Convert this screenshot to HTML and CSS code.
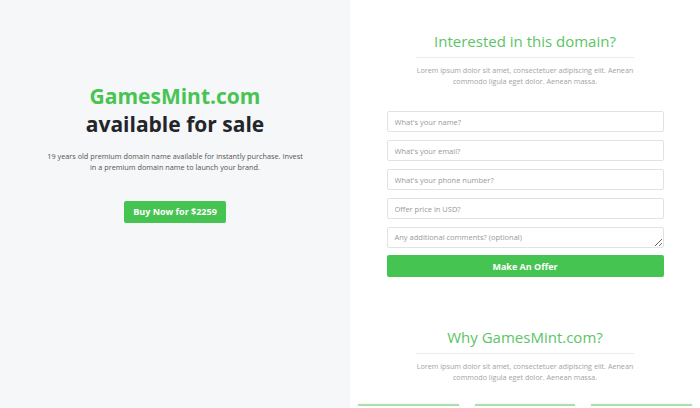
FILE: index.html
```html
<!DOCTYPE html>
<html lang="en">
<head>
    <meta charset="UTF-8">
    <meta name="viewport" content="width=device-width, initial-scale=1.0">
    <title>GamesMint.com is for sale</title>
    <link rel="stylesheet" href="styles.css">
</head>
<body>
    <div class="page">
        <section class="intro">
            <h1 class="intro-title">
                <span class="domain">GamesMint.com</span>
                <span class="sale">available for sale</span>
            </h1>
            <p class="intro-text">19 years old premium domain name available for instantly purchase. Invest in a premium domain name to launch your brand.</p>
            <a href="#offer" class="btn btn-buy">Buy Now for $2259</a>
        </section>

        <section class="side">
            <div class="block-head">
                <h2>Interested in this domain?</h2>
                <p>Lorem ipsum dolor sit amet, consectetuer adipiscing elit. Aenean commodo ligula eget dolor. Aenean massa.</p>
            </div>

            <form id="offer" class="offer-form">
                <input type="text" name="name" placeholder="What's your name?">
                <input type="email" name="email" placeholder="What's your email?">
                <input type="tel" name="phone" placeholder="What's your phone number?">
                <input type="text" name="price" placeholder="Offer price in USD?">
                <textarea name="comments" rows="2" placeholder="Any additional comments? (optional)"></textarea>
                <button type="submit" class="btn btn-offer">Make An Offer</button>
            </form>

            <div class="block-head why">
                <h2>Why GamesMint.com?</h2>
                <p>Lorem ipsum dolor sit amet, consectetuer adipiscing elit. Aenean commodo ligula eget dolor. Aenean massa.</p>
            </div>

            <div class="features">
                <div class="feature"></div>
                <div class="feature"></div>
                <div class="feature"></div>
            </div>
        </section>
    </div>
</body>
</html>
```

FILE: styles.css
```css
body {
    font-family: 'Open Sans', 'Noto Sans', sans-serif;
    margin: 0;
    padding: 0;
    color: #222;
    background-color: #fff;
}

.page {
    display: flex;
    height: 408px;
    overflow: hidden;
}

.intro {
    width: 350px;
    flex-shrink: 0;
    background-color: #f6f7f9;
    display: flex;
    flex-direction: column;
    align-items: center;
    padding-top: 82px;
    box-sizing: border-box;
    text-align: center;
}

.intro-title {
    margin: 0;
    font-size: 21px;
    line-height: 28px;
    font-weight: 700;
}

.intro-title span {
    display: block;
}

.domain {
    color: #47c451;
}

.sale {
    color: #23252a;
}

.intro-text {
    width: 262px;
    margin: 13px 0 0;
    font-size: 7.3px;
    line-height: 11px;
    color: #555;
}

.btn {
    display: inline-block;
    background-color: #46c452;
    color: #fff;
    font-weight: 700;
    font-size: 9px;
    border: 0;
    border-radius: 2px;
    text-decoration: none;
    font-family: inherit;
    cursor: pointer;
}

.btn-buy {
    margin-top: 28px;
    padding: 0 9px;
    height: 22px;
    line-height: 22px;
}

.side {
    flex: 1;
    min-width: 0;
    padding: 0 8px;
    display: flex;
    flex-direction: column;
    align-items: center;
}

.block-head {
    width: 218px;
    text-align: center;
    margin-top: 31px;
}

.block-head h2 {
    margin: 0;
    font-size: 15px;
    line-height: 20px;
    font-weight: 400;
    color: #5bc466;
    padding-bottom: 6px;
    border-bottom: 1px solid #ececec;
}

.block-head p {
    margin: 7px 0 0;
    font-size: 7.2px;
    line-height: 11px;
    color: #a3a3a3;
}

.offer-form {
    width: 277px;
    display: flex;
    flex-direction: column;
    gap: 8px;
    margin-top: 24px;
}

.offer-form input,
.offer-form textarea {
    width: 100%;
    height: 21px;
    box-sizing: border-box;
    border: 1px solid #e2e2e2;
    border-radius: 2px;
    padding: 0 7px;
    font-family: inherit;
    font-size: 7.5px;
    color: #333;
}

.offer-form textarea {
    padding-top: 4px;
    resize: vertical;
}

::placeholder {
    color: #999;
}

.btn-offer {
    width: 100%;
    height: 22px;
    margin-top: -1px;
}

.why {
    margin-top: 50px;
}

.features {
    width: 100%;
    display: flex;
    gap: 16px;
    margin-top: 21px;
}

.feature {
    flex: 1;
    height: 40px;
    border-top: 2px solid #a9e0ae;
    background-color: #fff;
    box-shadow: 0 0 3px rgba(0, 0, 0, 0.08);
}
```
